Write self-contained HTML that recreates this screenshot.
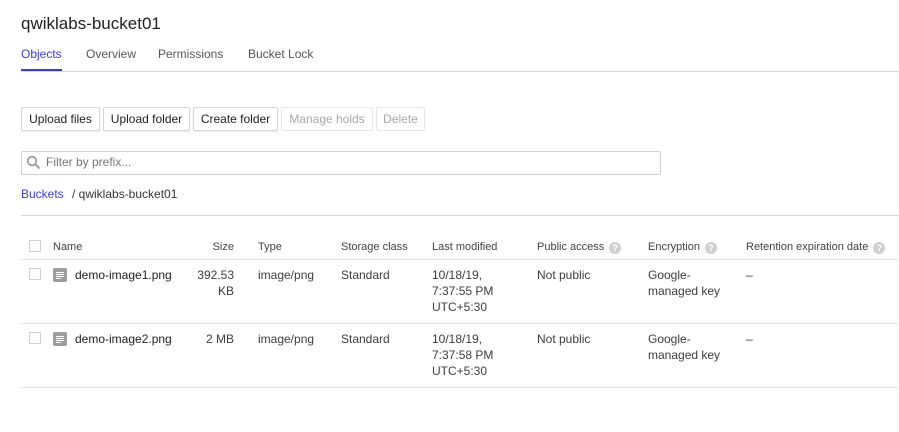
<!DOCTYPE html>
<html><head><style>
*{margin:0;padding:0;box-sizing:border-box}
body{width:899px;height:432px;background:#fff;font-family:"Liberation Sans",sans-serif;color:#212121;position:relative;overflow:hidden}
.a{position:absolute;white-space:nowrap}
.btn{position:absolute;top:107px;height:24px;border:1px solid #d6d6d6;border-radius:2px;background:#fff;font-size:12px;line-height:22px;text-align:center;color:#212121;box-shadow:0 1px 1px rgba(0,0,0,.08)}
.dis{color:#a8a8a8;border-color:#e6e6e6;box-shadow:none}
.hd{font-size:11px;color:#424242;top:241px}
.c{font-size:12px;line-height:16px;color:#3c3c3c}
.cb{position:absolute;width:12px;height:12px;border:1px solid #cfcfcf;border-radius:1px}
.hl{position:absolute;left:21px;width:877px;height:1px;background:#e0e0e0}
.q{display:inline-block;width:12px;height:12px;border-radius:50%;background:#cfcfcf;color:#fff;font-size:9px;line-height:12px;text-align:center;font-weight:bold;margin-left:5px;vertical-align:-1px}
.fi{position:absolute;width:14px;height:14px;border-radius:2px;background:#9e9e9e}
.fi i{position:absolute;left:3px;width:8px;height:1px;background:#fff}
</style></head><body>
<div class="a" style="left:21px;top:14px;font-size:17px;color:#202020">qwiklabs-bucket01</div>
<div class="a" style="left:21px;top:47px;font-size:12px;color:#3b3bd2">Objects</div>
<div class="a" style="left:86px;top:47px;font-size:12px;color:#555">Overview</div>
<div class="a" style="left:158px;top:47px;font-size:12px;color:#555">Permissions</div>
<div class="a" style="left:248px;top:47px;font-size:12px;color:#555">Bucket Lock</div>
<div class="a" style="left:21px;top:71px;width:878px;height:1px;background:#d6d6d6"></div>
<div class="a" style="left:21px;top:69px;width:41px;height:2px;background:#3b3bd2"></div>

<div class="btn" style="left:21px;width:79px">Upload files</div>
<div class="btn" style="left:103px;width:87px">Upload folder</div>
<div class="btn" style="left:193px;width:85px">Create folder</div>
<div class="btn dis" style="left:281px;width:92px">Manage holds</div>
<div class="btn dis" style="left:376px;width:49px">Delete</div>

<div class="a" style="left:21px;top:151px;width:640px;height:24px;border:1px solid #cfcfcf;border-radius:2px"></div>
<svg class="a" style="left:26px;top:155px" width="15" height="15" viewBox="0 0 15 15"><circle cx="6" cy="6" r="4.3" fill="none" stroke="#9e9e9e" stroke-width="1.8"/><path d="M9 9l4.5 4.5" stroke="#9e9e9e" stroke-width="2"/></svg>
<div class="a" style="left:46px;top:155px;font-size:12px;color:#757575">Filter by prefix...</div>

<div class="a" style="left:21px;top:187px;font-size:12px;color:#3b3bd2">Buckets</div>
<div class="a" style="left:72px;top:187px;font-size:12px;color:#333">/ qwiklabs-bucket01</div>
<div class="a" style="left:21px;top:215px;width:878px;height:1px;background:#d6d6d6"></div>

<div class="cb" style="left:29px;top:240px"></div>
<div class="a hd" style="left:53px">Name</div>
<div class="a hd" style="left:180px;width:54px;text-align:right">Size</div>
<div class="a hd" style="left:258px">Type</div>
<div class="a hd" style="left:341px">Storage class</div>
<div class="a hd" style="left:432px">Last modified</div>
<div class="a hd" style="left:537px">Public access<span class="q">?</span></div>
<div class="a hd" style="left:648px">Encryption<span class="q">?</span></div>
<div class="a hd" style="left:746px">Retention expiration date<span class="q">?</span></div>
<div class="hl" style="top:259px"></div>

<div class="cb" style="left:29px;top:268px"></div>
<div class="fi" style="left:53px;top:268px"><i style="top:4px"></i><i style="top:6px"></i><i style="top:8px"></i><i style="top:10px;width:5px"></i></div>
<div class="a c" style="left:75px;top:267px;color:#212121">demo-image1.png</div>
<div class="a c" style="left:180px;top:267px;width:54px;text-align:right">392.53<br>KB</div>
<div class="a c" style="left:258px;top:267px">image/png</div>
<div class="a c" style="left:341px;top:267px">Standard</div>
<div class="a c" style="left:432px;top:267px">10/18/19,<br>7:37:55 PM<br>UTC+5:30</div>
<div class="a c" style="left:537px;top:267px">Not public</div>
<div class="a c" style="left:648px;top:267px">Google-<br>managed key</div>
<div class="a c" style="left:746px;top:267px">–</div>
<div class="hl" style="top:323px"></div>

<div class="cb" style="left:29px;top:332px"></div>
<div class="fi" style="left:53px;top:332px"><i style="top:4px"></i><i style="top:6px"></i><i style="top:8px"></i><i style="top:10px;width:5px"></i></div>
<div class="a c" style="left:75px;top:331px;color:#212121">demo-image2.png</div>
<div class="a c" style="left:180px;top:331px;width:54px;text-align:right">2 MB</div>
<div class="a c" style="left:258px;top:331px">image/png</div>
<div class="a c" style="left:341px;top:331px">Standard</div>
<div class="a c" style="left:432px;top:331px">10/18/19,<br>7:37:58 PM<br>UTC+5:30</div>
<div class="a c" style="left:537px;top:331px">Not public</div>
<div class="a c" style="left:648px;top:331px">Google-<br>managed key</div>
<div class="a c" style="left:746px;top:331px">–</div>
<div class="hl" style="top:387px"></div>
</body></html>
